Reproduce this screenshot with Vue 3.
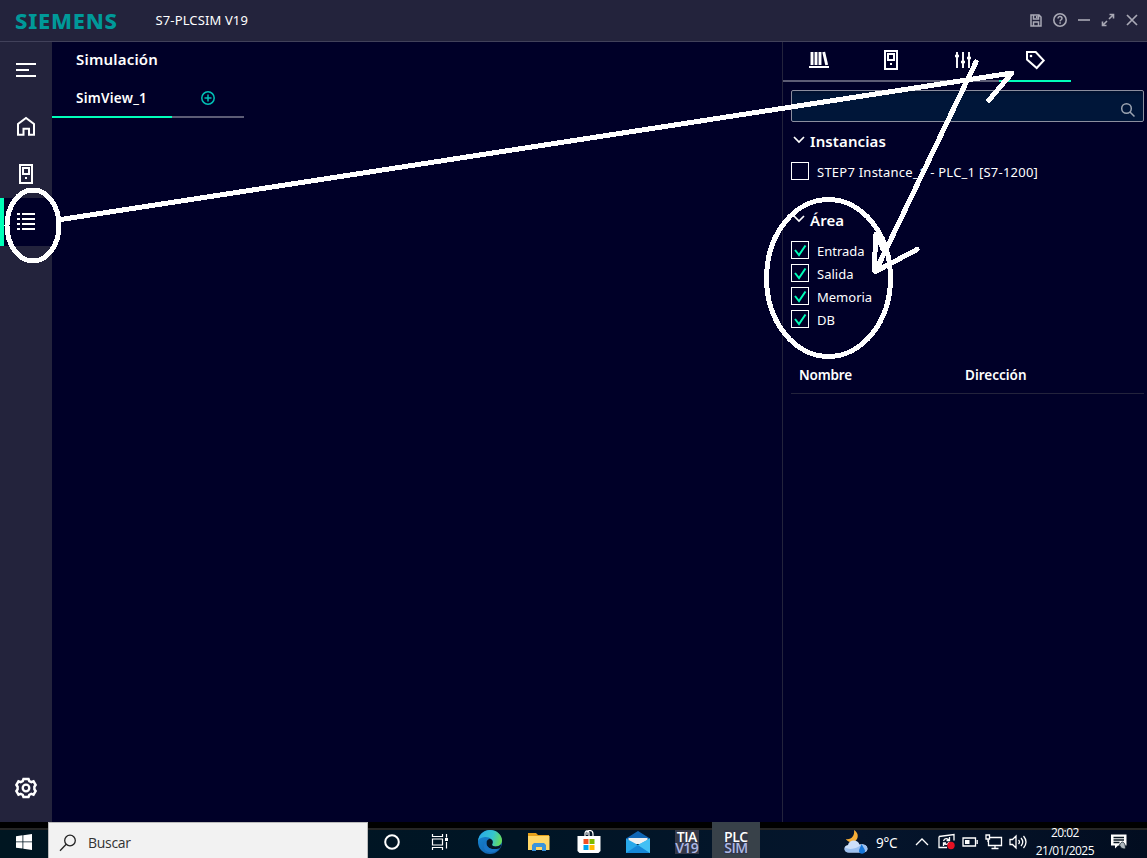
<script setup>
const areas = ['Entrada', 'Salida', 'Memoria', 'DB']
</script>

<template>
  <div class="screen">
    <header class="titlebar">
      <div class="brand">SIEMENS</div>
      <div class="app-title">S7-PLCSIM V19</div>
      <div class="window-tools">
        <svg viewBox="0 0 24 24"><path d="M7 7h8l2 2v9H7zM9.500 7v4h5V7M9.500 18v-4h5v4M12.700 8v2" stroke-width="1.500" /></svg>
        <svg viewBox="0 0 24 24"><circle cx="12" cy="12" r="6.200" stroke-width="1.600" /><path d="M10 10.500c0-2.700 4-2.400 4-.1 0 1.300-1.800 1.400-1.900 3M12.100 14.300v1.500" stroke-width="1.500" /></svg>
        <svg viewBox="0 0 24 24"><path d="M6 12h12" stroke-width="1.600" /></svg>
        <svg viewBox="0 0 24 24"><path d="M13 11l4.500-4.500M13.500 6.500h4v4M11 13l-4.500 4.500M6.500 13.500v4h4" stroke-width="1.600" /></svg>
        <svg viewBox="0 0 24 24"><path d="M7 7l10 10M17 7L7 17" stroke-width="1.700" /></svg>
      </div>
    </header>

    <div class="body">
      <nav class="sidebar">
        <button class="item menu"><svg viewBox="0 0 24 24"><path d="M2 6h20M2 12h13M2 18h20" /></svg></button>
        <button class="item"><svg viewBox="0 0 24 24"><path d="M4 20.700V10l8-6 8 6v10.700h-5v-6H9.500v6z" /></svg></button>
        <button class="item"><svg viewBox="0 0 24 24"><path d="M6 3h12v18H6z" /><path d="M9 6h6v6H9z" /><path d="M11 16h2" /></svg></button>
        <button class="item active"><svg viewBox="0 0 24 24"><path d="M3 4h3M8 4h13M3 9h3M8 9h13M3 14h3M8 14h13M3 19h3M8 19h13" /></svg></button>
        <button class="item settings">
          <svg viewBox="0 0 24 24">
            <path d="M9.500 3h5l.8 2.200 2 .9 2.200-.8 2.100 3.700-1.200 1.700v2.600l1.200 1.700-2.100 3.700-2.200-.8-2 .9-.8 2.200h-5l-.8-2.200-2-.9-2.200.8L2.400 15l1.200-1.700v-2.600L2.400 9l2.100-3.700 2.200.8 2-.9z" stroke-width="2.500" />
            <circle cx="12" cy="12" r="3.300" stroke-width="2.300" />
          </svg>
        </button>
      </nav>

      <main class="workspace">
        <h1>Simulación</h1>
        <div class="view-tabs">
          <div class="view-tab current"><span>SimView_1</span></div>
          <div class="view-tab add">
            <svg viewBox="0 0 16 16"><circle cx="8" cy="8" r="6.200" /><path d="M8 4.500v7M4.500 8h7" /></svg>
          </div>
        </div>
      </main>

      <aside class="panel">
        <div class="panel-tabs">
          <div class="panel-tab"><svg viewBox="0 0 24 24"><path d="M2 19h20" /><path d="M5 4v13M9 4v13M13 4v13" stroke-width="2.900" /><path d="M16.700 4l3 13" stroke-width="2.900" /></svg></div>
          <div class="panel-tab"><svg viewBox="0 0 24 24"><path d="M6 3h12v18H6z" /><path d="M9 6h6v6H9z" /><path d="M11 16h2" /></svg></div>
          <div class="panel-tab"><svg viewBox="0 0 24 24"><path d="M6 4v16M12 4v16M18 4v16" stroke-width="1.900" /><path d="M4 8h4M10 14h4M16 10h4" stroke-width="2.600" /></svg></div>
          <div class="panel-tab current"><svg viewBox="0 0 24 24"><path d="M4 4h8.700l8 8.500-7 7.500L4 11.500z" /><circle cx="8" cy="8" r="1.300" class="solid" /></svg></div>
        </div>
        <div class="content">
          <div class="search"><svg viewBox="0 0 16 16"><circle cx="6.500" cy="6.500" r="4.800" /><path d="M10 10l4.500 4.500" /></svg></div>
          <div class="group-title first"><svg viewBox="0 0 12 8"><path d="M1 1l5 5 5-5" /></svg><span>Instancias</span></div>
          <label class="check instance"><i class="box"></i><span class="t-step">STEP7 Instance_1 - PLC_1 [S7-1200]</span></label>
          <div class="group-title second"><svg viewBox="0 0 12 8"><path d="M1 1l5 5 5-5" /></svg><span>Área</span></div>
          <div class="checks">
            <label v-for="a in areas" :key="a" class="check">
              <i class="box"><svg viewBox="0 0 16 16"><path d="M3 8l4 5 6.500-9.500" /></svg></i><span>{{ a }}</span>
            </label>
          </div>
          <div class="table-head"><span class="t-name">Nombre</span><span>Dirección</span></div>
        </div>
      </aside>
    </div>

    <footer class="taskbar">
      <div class="start"><svg viewBox="0 0 16 16"><path d="M0 2.200l6.500-.9v6.200H0zM7.300 1.200L16 0v7.500H7.300zM0 8.300h6.500v6.300L0 13.700zM7.300 8.300H16V16l-8.700-1.200z" /></svg></div>
      <div class="find">
        <svg viewBox="0 0 18 18"><circle cx="11" cy="6.500" r="5.300" /><path d="M7.200 10.300L1 16.700" /></svg><span>Buscar</span>
      </div>
      <div class="apps">
        <div class="app"><svg class="i24" viewBox="0 0 24 24"><circle cx="12" cy="12" r="6.800" fill="none" stroke="#fff" stroke-width="2" /></svg></div>
        <div class="app"><svg class="i24 views" viewBox="0 0 24 24"><path d="M4.500 4v2.500h10V4M4.500 9h10v6h-10zM4.500 20v-2.500h10V20M18.500 4v3.500M18.500 12v6.500" fill="none" stroke="#fff" stroke-width="1.200" /><path d="M17 8h3v3h-3z" fill="#fff" /></svg></div>
        <div class="app">
          <svg class="i24" viewBox="0 0 24 24">
            <defs>
              <linearGradient id="edgeTop" x1="0" y1=".3" x2="1" y2=".5"><stop offset="0" stop-color="#29a8e8" /><stop offset=".6" stop-color="#35c5cd" /><stop offset="1" stop-color="#69dc58" /></linearGradient>
              <linearGradient id="edgeLow" x1="0" y1="0" x2=".7" y2="1"><stop offset="0" stop-color="#1689d5" /><stop offset="1" stop-color="#1262ae" /></linearGradient>
            </defs>
            <circle cx="12" cy="12" r="12" fill="url(#edgeLow)" />
            <path d="M0 11C1 4 6 0 12 0c7 0 12 5 12 10.300 0 4-3 6.200-6.300 6.200-2.700 0-4.200-1-3.500-2.200C17 10 11 6.500 7 7 3 7.300 1 9 0 11z" fill="url(#edgeTop)" />
            <path d="M8.500 13c0-2 1.300-3.600 3-4.200 3.200.5 4 3.200 2.700 5.500-.7 1.200.8 2.200 3.500 2.200 2.200 0 4-.7 5.200-2 .3 1.200-.3 2.500-1 3.500-5.500 3.500-13.400.5-13.400-5z" fill="#061726" />
            <path d="M8.500 12c-1.500 5 4 8.500 12.500 6.500-3.500 5-11 5-14 1.500-2-3-1.500-6.500 1.500-8z" fill="#1976c8" />
          </svg>
        </div>
        <div class="app"><svg class="i24" viewBox="0 0 24 24"><path d="M1 3h8l2 2h11v5H1z" fill="#e5a11b" /><path d="M1 6h21.500v14H1z" fill="#ffd767" /><path d="M5 21v-6l2-2h10l2 2v6h-4v-4H9v4z" fill="#3b94db" /></svg></div>
        <div class="app"><svg class="i24" viewBox="0 0 24 24"><path d="M8 7V3.500C8 0 12 0 12 3.500V6M10 5V3c0-3.500 6-3.500 6 1v3" fill="none" stroke="#fff" stroke-width="1.200" /><path d="M.5 6h23v15l-2 2h-19l-2-2z" fill="#fff" /><path d="M6.500 9h5v5h-5z" fill="#f25022" /><path d="M12.500 9h5v5h-5z" fill="#7fba00" /><path d="M6.500 15h5v5h-5z" fill="#00a4ef" /><path d="M12.500 15h5v5h-5z" fill="#ffb900" /></svg></div>
        <div class="app"><svg class="i24" viewBox="0 0 24 24"><path d="M0 8.500L12 1l12 7.500V12H0z" fill="#0f66b5" /><path d="M2.500 8h19v6h-19z" fill="#f1f1f1" /><path d="M0 8.500L12 15l12-6.500V23H0z" fill="#28a8ea" /><path d="M12 15L24 23H0z" fill="#1687d8" /><path d="M12 15L24 8.500V23z" fill="#43c0f4" /></svg></div>
        <div class="app"><div class="tile"><b>TIA</b><b class="blue">V19</b></div></div>
        <div class="app running"><div class="tile"><b>PLC</b><b class="blue">SIM</b></div></div>
      </div>
      <div class="tray">
        <svg class="weather" viewBox="0 0 24 24">
          <path d="M10 0c5 3 5 9 0 12-4 1-7-1-8-3 5 1 9-3 8-9z" fill="#f5ad37" />
          <path d="M5 22.500c-6 0-6-7-1-7.500 1-6 10-6 11.500-.5C25 13 26 22.500 19 22.500z" fill="#cddff9" />
          <path d="M5 22.500c-4 0-5-3-3.500-5 4 3 12 1 16-3C25 14 25 22.500 19 22.500z" fill="#9cc0f0" />
          <path d="M17.500 14c2 4 3.500 5 3.500 7 0 3.500-6 3.500-6 0 0-2 1.500-3.500 2.500-7z" fill="#1676da" />
        </svg>
        <span class="temp">9°C</span>
        <svg class="chev" viewBox="0 0 14 8"><path d="M1 7l6-6 6 6" /></svg>
        <svg class="sync" viewBox="0 0 18 18"><path d="M1 3.500l15-2v6M1 3.500v11h8M5.500 8c1-3 4-3 6-.5M11.500 4v3.500H8.500M11 9c-1 3-4 3-5.500.8M5.500 13V9.800H8" /><circle cx="13" cy="12.500" r="3.700" class="alert" /></svg>
        <svg class="battery" viewBox="0 0 16 10"><path d="M1 1h12.500v8H1zM15.200 3v4" /><path d="M3 3h4.500v4H3z" class="fill" /></svg>
        <svg class="network" viewBox="0 0 18 16"><path d="M5 3.500h11.500v8H3.500V6M10 11.500v3M6.500 14.500h7M1 1h3.500v4H1zM3 5v3" /></svg>
        <svg class="volume" viewBox="0 0 18 16"><path d="M1 5.500h2.500L7 2v12l-3.500-3.500H1zM9.500 6q2 2 0 4M12 4q3.500 4 0 8M14.500 2q5 6 0 12" /></svg>
        <div class="clock"><span>20:02</span><span>21/01/2025</span></div>
        <svg class="notes" viewBox="0 0 18 18"><path d="M1 1.500h15.500v11H8l-3 3v-3H1z" fill="#fff" /><path d="M3.500 4.500h10.500M3.500 7h10.500M3.500 9.500h6" stroke="#071521" /><path d="M9.500 12c3-6 6-2 6 4-3 0-5-1-6-4z" fill="#aeb7be" stroke="#071521" stroke-width=".8" /></svg>
      </div>
    </footer>

    <svg class="annotations" viewBox="0 0 1147 858" shape-rendering="crispEdges">
      <ellipse cx="33" cy="225.500" rx="26" ry="35.500" />
      <path d="M61 219.500L1012 73L989 100" />
      <ellipse cx="828.500" cy="278" rx="62" ry="78.500" />
      <path d="M976 62L875.500 271.500L917 249.500M874 270L876 234L883 249" />
    </svg>
  </div>
</template>

<style>
html, body { margin: 0; overflow: hidden; background: #000028; }
</style>

<style scoped>
* { box-sizing: border-box; }
.screen { position: relative; width: 1147px; height: 858px; display: flex; flex-direction: column; background: #000028; color: #fff; font-family: "Noto Sans", "Open Sans", sans-serif; font-size: 13px; overflow: hidden; }
svg { display: block; flex: none; }
.titlebar { height: 42px; flex: none; display: flex; align-items: center; background: #23233c; border-bottom: 1px solid #41415a; padding: 0 3px 0 15px; }
.brand { width: 140.500px; color: #099; font: 800 22px/40px "Noto Sans", sans-serif; letter-spacing: .75px; padding-bottom: 1px; }
.app-title { font-size: 13px; letter-spacing: .13px; line-height: 38px; padding-bottom: 2px; }
.window-tools { margin-left: auto; display: flex; padding-bottom: 1px; }
.window-tools svg { width: 24px; height: 24px; fill: none; stroke: #a9a9b5; }
.body { display: flex; height: 780px; flex: none; }
.sidebar { width: 52px; background: #23233c; display: flex; flex-direction: column; padding-bottom: 10px; }
.item { height: 48px; padding: 0; border: 0; background: none; display: flex; align-items: center; justify-content: center; flex: none; }
.item svg, .panel-tab svg { width: 24px; height: 24px; fill: none; stroke: #fff; stroke-width: 2; }
.menu { height: 56px; margin-bottom: 4px; }
.item.active { background: #000028; border-left: 4px solid #00ffb9; padding-right: 4px; }
.settings { margin-top: auto; }
.workspace { width: 730px; flex: none; }
h1 { margin: 0; padding-left: 24px; height: 36px; font-size: 15px; font-weight: 600; line-height: 34px; letter-spacing: .2px; }
.view-tabs { display: flex; }
.view-tab { height: 40px; display: flex; align-items: center; border-bottom: 2px solid #5c5c75; }
.view-tab.current { width: 120px; padding: 2px 0 0 24px; border-color: #00ffb9; font-size: 13.500px; font-weight: 600; letter-spacing: .25px; }
.add { width: 72px; justify-content: center; padding-top: 2px; }
.add svg { width: 16px; height: 16px; fill: none; stroke: #00c1b6; stroke-width: 1.500; }
.panel { flex: 1; border-left: 1px solid #23233c; }
.panel-tabs { display: flex; height: 40px; }
.panel-tab { width: 72px; display: flex; justify-content: center; padding-top: 6px; border-bottom: 2px solid #5c5c75; }
.panel-tab.current { border-color: #00ffb9; }
.panel-tab .solid { fill: #fff; stroke: none; }
.content { padding: 8px 3px 0 8px; }
.search { height: 32px; border: 1px solid #8b8e9f; border-radius: 2px; background: linear-gradient(#00102f, #001639 5px); display: flex; align-items: center; justify-content: flex-end; padding: 7px 7px 0 0; }
.search svg { width: 16px; height: 16px; fill: none; stroke: #9ba4b1; stroke-width: 1.500; }
.group-title { display: flex; gap: 7px; height: 24px; line-height: 24px; font-size: 15px; font-weight: 600; letter-spacing: .1px; }
.group-title svg { width: 12px; height: 8px; margin: 7px 0 0 2px; fill: none; stroke: #fff; stroke-width: 1.700; }
.group-title span { margin-left: -2px; }
.first { margin-top: 7px; }
.second { margin-top: 28px; }
.check { display: flex; align-items: center; gap: 8px; height: 18px; font-size: 13px; }
.instance { margin-top: 9px; }
.check span { padding-top: 2px; white-space: nowrap; }
.box { width: 18px; height: 18px; border: 1px solid #fff; }
.box svg { width: 16px; height: 16px; fill: none; stroke: #00ffb9; stroke-width: 2; }
.checks { display: flex; flex-direction: column; gap: 5px; margin-top: 9px; }
.check .t-step { letter-spacing: .24px; }
.table-head { display: grid; grid-template-columns: 166px 1fr; padding-left: 8px; margin-top: 29px; height: 37px; line-height: 36px; border-bottom: 1px solid #23233c; font-size: 13.500px; font-weight: 600; }
.t-name { letter-spacing: -.15px; }
.taskbar { height: 36px; flex: none; display: flex; background: linear-gradient(#000 0 6px, #252525 6px 8px, transparent 8px), linear-gradient(90deg, #001621, #001525 45%, #05152c 75%, #020d20); }
.start { width: 48px; padding: 12px 16px; }
.start svg { width: 16px; height: 16px; fill: #fff; }
.find { width: 320px; background: #f2f2f2; border: 1px solid #bbb; border-bottom: 0; display: flex; align-items: center; gap: 11px; padding: 4px 0 0 10px; color: #333; font: 14px "Open Sans", "Noto Sans", sans-serif; letter-spacing: -.3px; }
.find svg { width: 18px; height: 18px; fill: none; stroke: #222; stroke-width: 1.300; }
.apps { display: flex; gap: 1.140px; }
.app { width: 48px; height: 36px; display: flex; justify-content: center; padding-top: 7px; }
.i24 { width: 24px; height: 24px; }
.app .i24 { margin-top: 1px; }
.views { margin-left: -2px; }
.running { background: #384149; }
.tile { width: 24px; height: 24px; background: #343848; display: flex; flex-direction: column; align-items: center; font: 14px/11px "Open Sans", sans-serif; letter-spacing: -.5px; margin-top: 1px; padding-top: 1px; }
.tile b { font-weight: 600; white-space: nowrap; }
.tile .blue { color: #adb7e5; }
.tray { flex: 1; display: flex; align-items: center; padding: 4px 0 0 84px; }
.tray > svg { fill: none; stroke: #fff; stroke-width: 1.300; }
.tray .weather { width: 24px; height: 24px; stroke: none; }
.temp { width: 39px; margin-left: 8px; font-size: 13.500px; letter-spacing: -.2px; padding-top: 1px; }
.chev { width: 14px; height: 8px; }
.sync { width: 18px; height: 18px; margin-left: 9px; }
.alert { fill: #e81123; stroke: none; }
.battery { width: 16px; height: 10px; margin-left: 6px; }
.battery .fill { fill: #fff; stroke: none; }
.network { width: 18px; height: 16px; margin-left: 7px; }
.volume { width: 18px; height: 16px; margin-left: 6px; }
.clock { width: 62px; margin-left: 7px; display: flex; flex-direction: column; align-items: center; font: 12px/18px "Open Sans", sans-serif; letter-spacing: -.55px; }
.tray .notes { width: 18px; height: 18px; margin-left: 14px; stroke: none; }
.annotations { position: absolute; inset: 0; width: 1147px; height: 858px; fill: none; stroke: #fff; stroke-width: 5; stroke-linecap: round; stroke-linejoin: round; pointer-events: none; }
</style>
